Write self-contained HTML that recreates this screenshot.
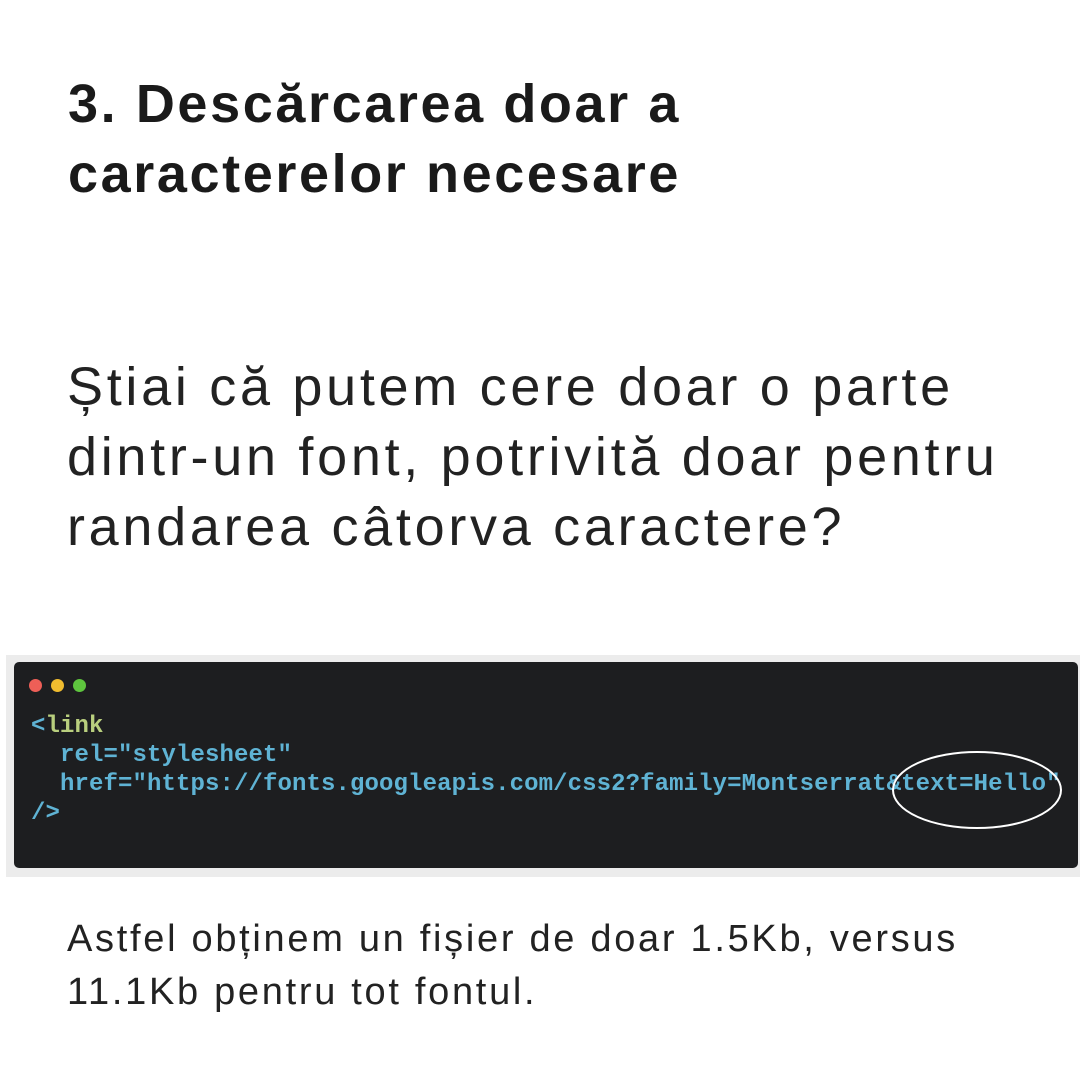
<!DOCTYPE html>
<html><head><meta charset="utf-8"><style>
body{margin:0;width:1080px;height:1080px;background:#fff;position:relative;overflow:hidden;font-family:"Liberation Sans",sans-serif;color:#1a1a1a}
.t{position:absolute;left:68px;top:69px;font-size:54px;font-weight:bold;line-height:70px;letter-spacing:2.6px}
.p{position:absolute;left:67px;top:352px;font-size:54px;line-height:70px;color:#222;letter-spacing:3.7px}
.f{position:absolute;left:67px;top:913px;font-size:38px;line-height:53px;color:#222;letter-spacing:2.7px}
.wrap{position:absolute;left:6px;top:655px;width:1074px;height:222px;background:#ececec}
.code{position:absolute;left:14px;top:662px;width:1064px;height:206px;background:#1d1e20;border-radius:5px}
.d{position:absolute;top:679px;width:13px;height:13px;border-radius:50%}
pre{position:absolute;left:31px;top:712px;margin:0;font-family:"Liberation Mono",monospace;font-weight:bold;font-size:24px;line-height:29px;color:#5fb3d4;letter-spacing:0.1px}
.g{color:#b9cf7e}
</style></head><body>
<div class="t">3. Descărcarea doar a<br>caracterelor necesare</div>
<div class="p">Știai că putem cere doar o parte<br>dintr-un font, potrivită doar pentru<br>randarea câtorva caractere?</div>
<div class="wrap"></div>
<div class="code"></div>
<div class="d" style="left:29px;background:#ee5f57"></div>
<div class="d" style="left:51px;background:#f0bc2f"></div>
<div class="d" style="left:73px;background:#5ec53e"></div>
<pre>&lt;<span class="g">link</span>
  rel="stylesheet"
  href="https://fonts.googleapis.com/css2?family=Montserrat&amp;text=Hello"
/&gt;</pre>
<svg style="position:absolute;left:0;top:0" width="1080" height="1080"><ellipse cx="977" cy="790" rx="84" ry="38" fill="none" stroke="#fff" stroke-width="2"/></svg>
<div class="f">Astfel obținem un fișier de doar 1.5Kb, versus<br>11.1Kb pentru tot fontul.</div>
</body></html>
